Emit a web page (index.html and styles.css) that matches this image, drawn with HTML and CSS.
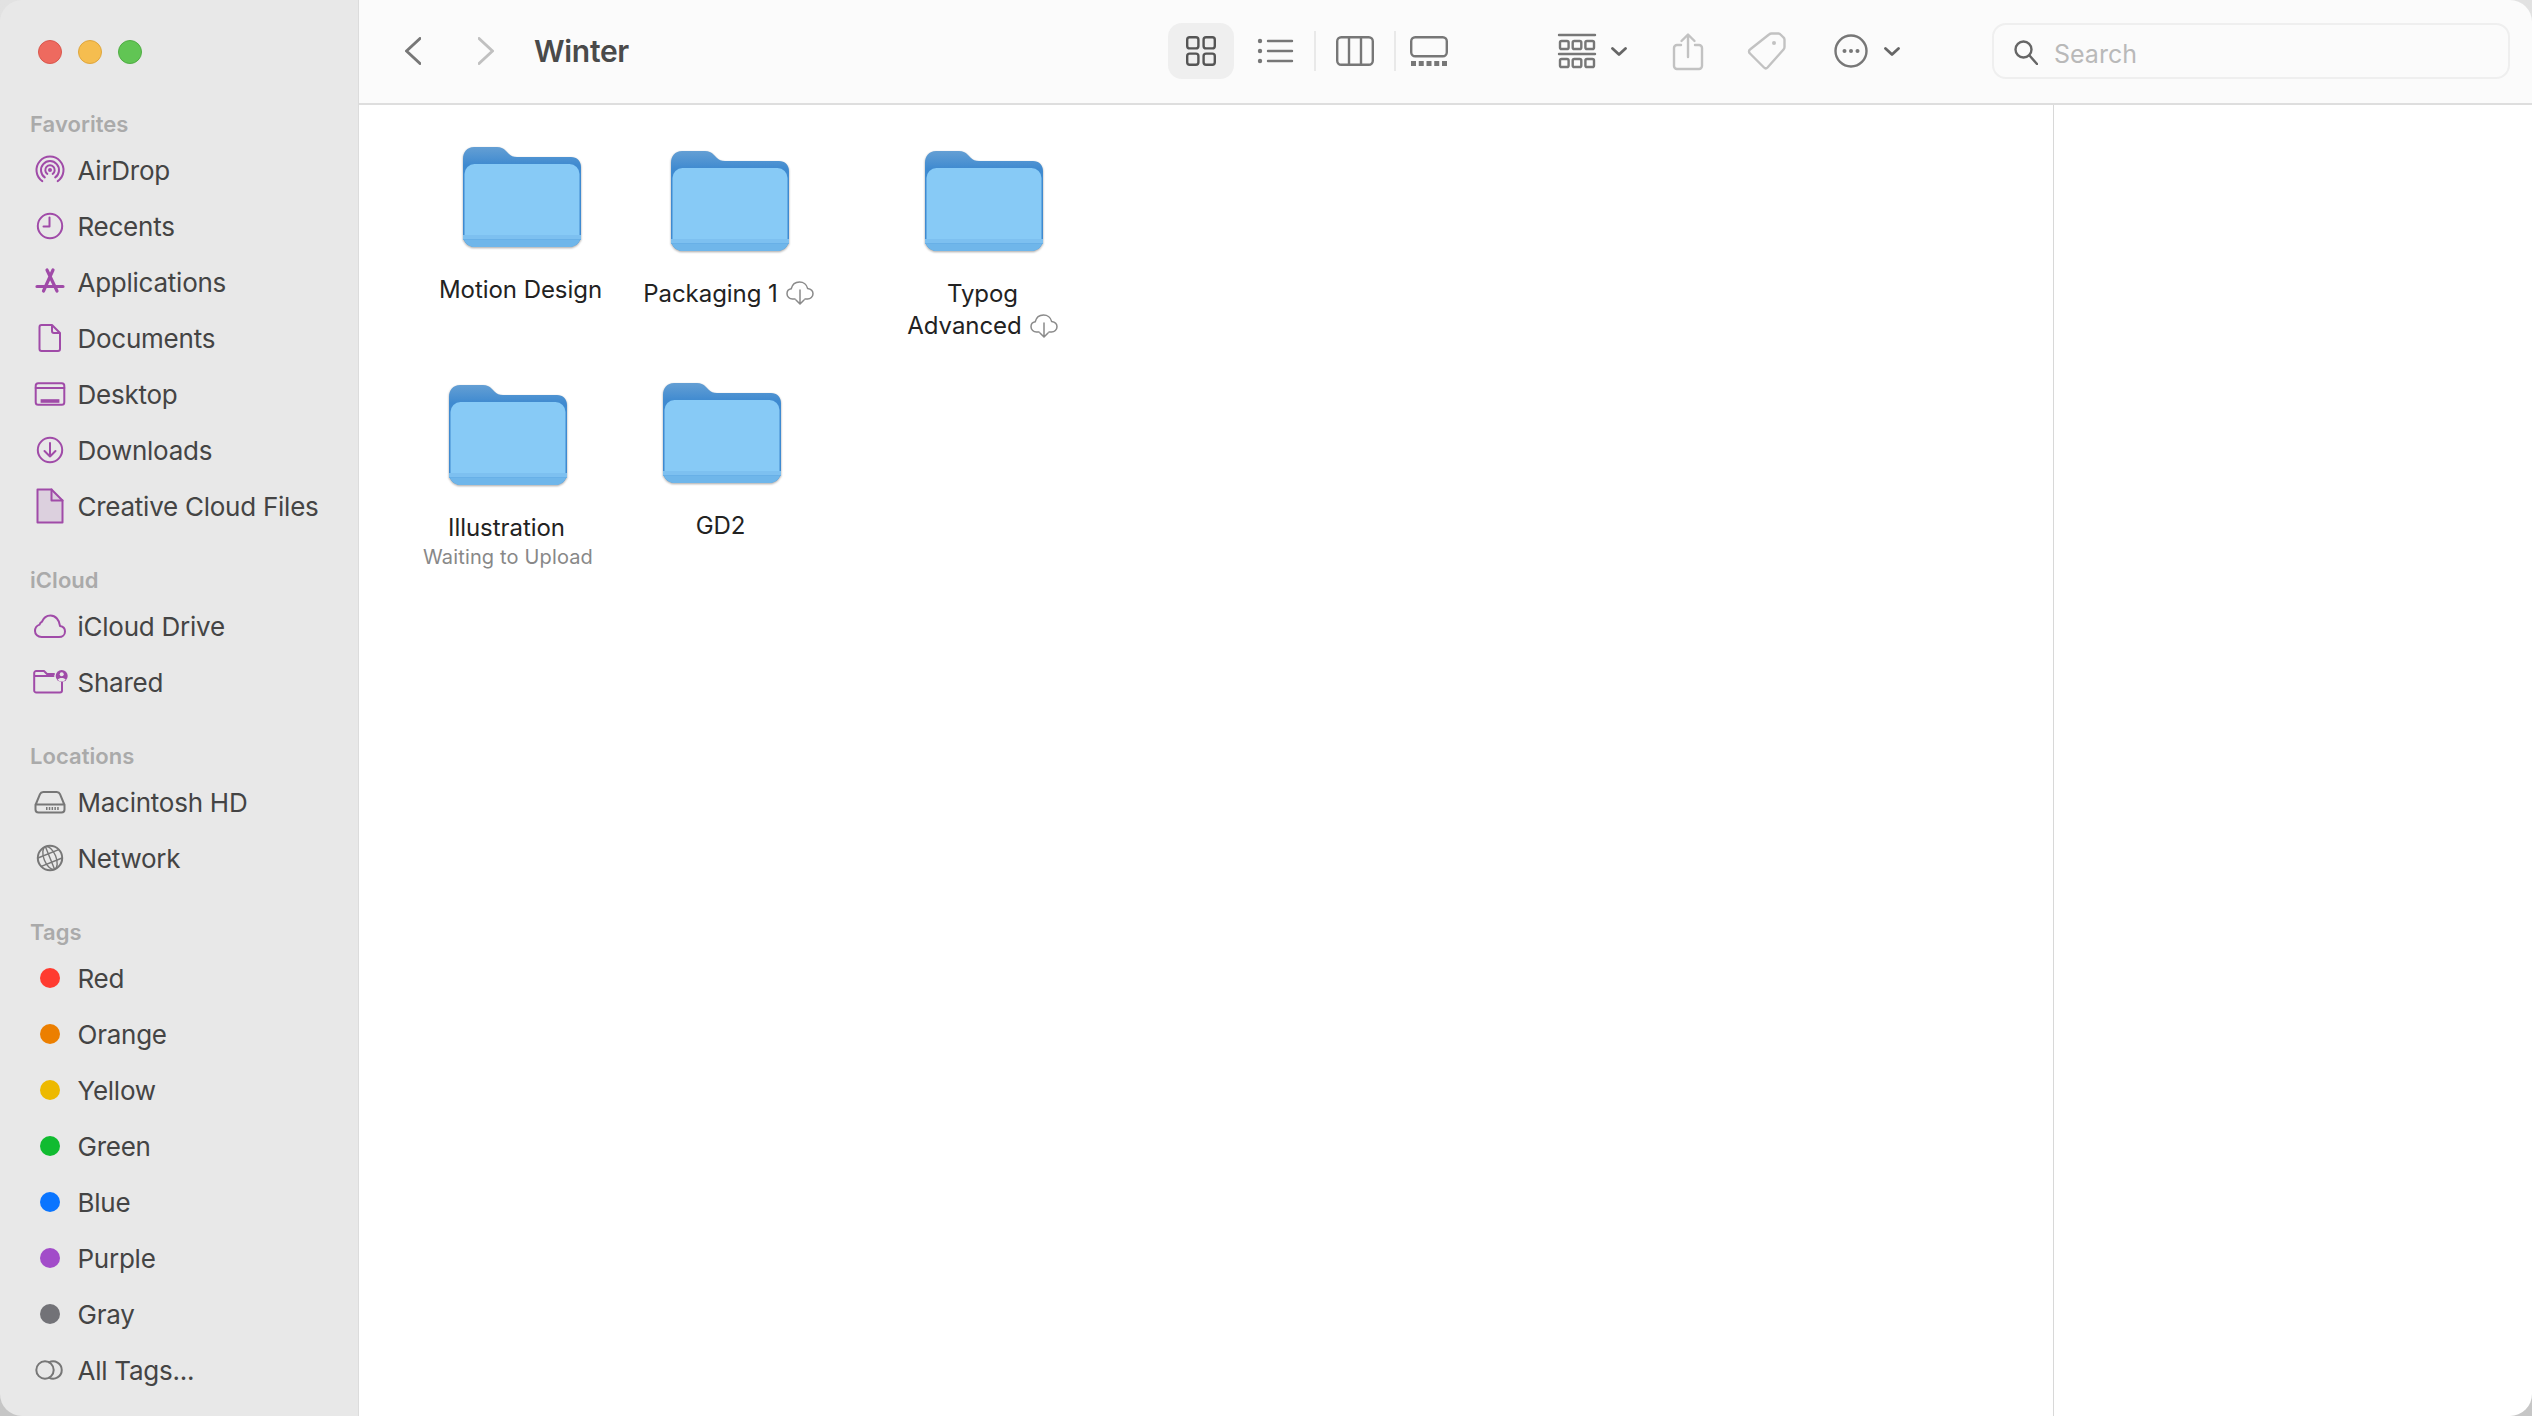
FILE: index.html
```html
<!DOCTYPE html>
<html>
<head>
    <title>Winter</title>
    <link rel="stylesheet" href="styles.css">
</head>
<body>
    <svg class="defs">
        <defs>
            <linearGradient id="folderBack" x1="0" y1="0" x2="0" y2="1">
                <stop offset="0" stop-color="#649fd4"/>
                <stop offset="0.18" stop-color="#3f8ad0"/>
            </linearGradient>
            <symbol id="folder" viewBox="0 0 118 100">
                <path fill="url(#folderBack)" d="M0 12C0 5 4 0 11 0H34C38 0 40 1 43 4L46 7C48 9 50 10 54 10H108C114 10 118 14 118 20V88C118 95 113 100 106 100H12C5 100 0 95 0 88Z"/>
                <rect x="1.5" y="17" width="115" height="83" rx="10" fill="#87caf6"/>
                <path fill="#6fb6ea" d="M0 88H118C118 95 113 100 106 100H12C5 100 0 95 0 88Z"/>
                <path fill="#7dc0f0" d="M0 88H118V92H0Z"/>
                <path fill="#68b0e7" d="M0 92H118V93H0Z"/>
            </symbol>
            <symbol id="cloudDown" viewBox="0 0 28 24">
                <path fill="none" stroke="currentColor" stroke-width="1.5" stroke-linecap="round" d="M9 18H6.5C3.5 18 1 15.8 1 12.8C1 10.2 2.8 8.2 5.2 7.8C6.2 3.8 9.5 1 13.5 1C17.5 1 20.8 3.6 21.6 7.4C24.8 7.8 27 10 27 12.8C27 15.8 24.5 18 21.5 18H19M14 9V23M10 19L14 23L18 19"/>
            </symbol>
        </defs>
    </svg>

    <div class="window">
        <aside class="sidebar">
            <div class="lights">
                <span class="light light-red"></span>
                <span class="light light-yellow"></span>
                <span class="light light-green"></span>
            </div>

            <h2 class="side-title">Favorites</h2>
            <div class="side-row">
                <svg class="side-icon" viewBox="0 0 36 36"><path d="M10.3 29.1A13.5 13.5 0 1 1 25.7 29.1M12.8 25.4A9 9 0 1 1 23.2 25.4M15.3 21.9A4.7 4.7 0 1 1 20.7 21.9"/><circle class="solid" cx="18" cy="18" r="2"/></svg>
                AirDrop
            </div>
            <div class="side-row">
                <svg class="side-icon" viewBox="0 0 36 36"><circle cx="18" cy="18" r="12.2"/><path d="M17.5 9.5V18.5H11.5"/></svg>
                Recents
            </div>
            <div class="side-row">
                <svg class="side-icon thick" viewBox="0 0 36 36"><path d="M21 6L11.5 27M15 6L25 27M5 22.5H31"/></svg>
                Applications
            </div>
            <div class="side-row">
                <svg class="side-icon" viewBox="0 0 36 36"><path d="M9.5 5H20L28 13V29A2 2 0 0 1 26 31H9.5A2 2 0 0 1 7.5 29V7A2 2 0 0 1 9.5 5ZM20 5V11A2 2 0 0 0 22 13H28"/></svg>
                Documents
            </div>
            <div class="side-row">
                <svg class="side-icon" viewBox="0 0 36 36"><rect x="3.7" y="7.2" width="28.6" height="21.6" rx="2.5"/><path d="M3.7 12H32.3"/><rect class="solid" x="8.6" y="23.2" width="18.8" height="3.6"/></svg>
                Desktop
            </div>
            <div class="side-row">
                <svg class="side-icon" viewBox="0 0 36 36"><circle cx="18" cy="18" r="12.2"/><path d="M18 11V24.5M12.5 19L18 24.5L23.5 19"/></svg>
                Downloads
            </div>
            <div class="side-row">
                <svg class="side-icon" viewBox="0 0 36 36"><path class="soft" d="M5.5 1.5H19.5L30.5 12.5V34.5H5.5Z"/><path d="M19.5 1.5V12.5H30.5"/></svg>
                Creative Cloud Files
            </div>

            <h2 class="side-title side-gap">iCloud</h2>
            <div class="side-row">
                <svg class="side-icon" viewBox="0 0 36 36"><path d="M9.5 29H27C30.4 29 33 26.6 33 23.4C33 20.5 30.9 18.3 28 17.9C27.5 12 23.4 7.5 18.5 7.5C14.5 7.5 11.5 9.9 10 13.7C8.5 14 8 15 7.6 16.6C4.8 17.6 3 20 3 23C3 26.5 5.9 29 9.5 29Z"/></svg>
                iCloud Drive
            </div>
            <div class="side-row">
                <svg class="side-icon" viewBox="0 0 36 36"><path d="M21.5 12H2.2V26.5A2 2 0 0 0 4.2 28.5H28A2 2 0 0 0 30 26.5V18M2.2 12V9A2 2 0 0 1 4.2 7H12L15 10H22"/><circle class="solid" cx="29.7" cy="12" r="6"/><circle class="cut" cx="29.7" cy="10.2" r="2"/><path class="cut" d="M25.7 15.5C27 13.4 32.4 13.4 33.7 15.5L31.5 17.5H27.5Z"/></svg>
                Shared
            </div>

            <h2 class="side-title side-gap">Locations</h2>
            <div class="side-row">
                <svg class="side-icon gray" viewBox="0 0 36 36"><path d="M3.5 21L8 10.2A3.5 3.5 0 0 1 11.2 8H24.8A3.5 3.5 0 0 1 28 10.2L32.5 21V25.5A3 3 0 0 1 29.5 28.5H6.5A3 3 0 0 1 3.5 25.5ZM3.5 20.5H32.5"/><path class="vents" d="M14 24.5H27"/></svg>
                Macintosh HD
            </div>
            <div class="side-row">
                <svg class="side-icon gray" viewBox="0 0 36 36"><circle cx="18" cy="18" r="12.2"/><g class="thin" transform="rotate(-22 18 18)"><ellipse cx="18" cy="18" rx="6" ry="12.2"/><path d="M18 5.8V30.2M6.8 13.5H29.2M6.8 22.5H29.2"/></g></svg>
                Network
            </div>

            <h2 class="side-title side-gap">Tags</h2>
            <div class="side-row"><span class="dot-box"><span class="dot dot-red"></span></span>Red</div>
            <div class="side-row"><span class="dot-box"><span class="dot dot-orange"></span></span>Orange</div>
            <div class="side-row"><span class="dot-box"><span class="dot dot-yellow"></span></span>Yellow</div>
            <div class="side-row"><span class="dot-box"><span class="dot dot-green"></span></span>Green</div>
            <div class="side-row"><span class="dot-box"><span class="dot dot-blue"></span></span>Blue</div>
            <div class="side-row"><span class="dot-box"><span class="dot dot-purple"></span></span>Purple</div>
            <div class="side-row"><span class="dot-box"><span class="dot dot-gray"></span></span>Gray</div>
            <div class="side-row">
                <svg class="side-icon gray" viewBox="0 0 36 36"><circle cx="13" cy="18" r="8.7"/><path d="M17 10.3A8.7 8.7 0 1 1 17 25.7"/></svg>
                All Tags...
            </div>
        </aside>

        <main class="main">
            <header class="toolbar">
                <svg class="chevron" width="16" height="28" viewBox="0 0 16 28"><path d="M15 1.5L1.5 14L15 26.5"/></svg>
                <svg class="chevron chevron-off" width="16" height="28" viewBox="0 0 16 28"><path d="M1 1.5L14.5 14L1 26.5"/></svg>
                <div class="title">Winter</div>

                <div class="view-btn view-active">
                    <svg class="tool-icon dark" width="30" height="30" viewBox="0 0 30 30"><rect x="1.2" y="1.2" width="11.2" height="11.2" rx="2.5"/><rect x="17.6" y="1.2" width="11.2" height="11.2" rx="2.5"/><rect x="1.2" y="17.6" width="11.2" height="11.2" rx="2.5"/><rect x="17.6" y="17.6" width="11.2" height="11.2" rx="2.5"/></svg>
                </div>
                <div class="view-btn view-list">
                    <svg class="tool-icon" width="36" height="26" viewBox="0 0 36 26"><path d="M11 3H35M11 13H35M11 23H35"/><circle class="solid" cx="3" cy="3" r="2.2"/><circle class="solid" cx="3" cy="13" r="2.2"/><circle class="solid" cx="3" cy="23" r="2.2"/></svg>
                </div>
                <span class="divider"></span>
                <div class="view-btn view-column">
                    <svg class="tool-icon" width="38" height="30" viewBox="0 0 38 30"><rect x="1.2" y="1.2" width="35.6" height="27.6" rx="4"/><path d="M13 1.2V28.8M25 1.2V28.8"/></svg>
                </div>
                <span class="divider"></span>
                <div class="view-btn">
                    <svg class="tool-icon" width="38" height="30" viewBox="0 0 38 30"><rect x="1.2" y="1.2" width="35.6" height="19" rx="4"/><path class="dots" d="M1 27.5H37"/></svg>
                </div>

                <div class="tool-group tool-sort">
                    <svg class="tool-icon" width="36" height="34" viewBox="0 0 36 34"><path d="M0 1H36M0 20H36"/><rect x="1" y="7" width="8.6" height="8" rx="1.6"/><rect x="13.7" y="7" width="8.6" height="8" rx="1.6"/><rect x="26.4" y="7" width="8.6" height="8" rx="1.6"/><rect x="1" y="25" width="8.6" height="8" rx="1.6"/><rect x="13.7" y="25" width="8.6" height="8" rx="1.6"/><rect x="26.4" y="25" width="8.6" height="8" rx="1.6"/></svg>
                    <svg class="caret" width="16" height="9" viewBox="0 0 16 9"><path d="M1.5 1.5L8 7.5L14.5 1.5"/></svg>
                </div>
                <svg class="tool-icon faded tool-share" width="30" height="37" viewBox="0 0 30 37"><path d="M8 12H4A3 3 0 0 0 1 15V33A3 3 0 0 0 4 36H26A3 3 0 0 0 29 33V15A3 3 0 0 0 26 12H22M15 24V2M8.5 8L15 1.5L21.5 8"/></svg>
                <svg class="tool-icon faded tool-tag" width="38" height="38" viewBox="0 0 38 38"><path d="M2 17.5L21 2.5A4 4 0 0 1 24 1.5H30.5A3 3 0 0 1 32.5 2.5L35.5 5.5A3 3 0 0 1 36.5 7.5V15A4 4 0 0 1 35.5 17.5L19.5 35.5A2.5 2.5 0 0 1 16 35.5L2 21.5A2.5 2.5 0 0 1 2 17.5Z"/><circle class="solid" cx="26" cy="11" r="2"/></svg>
                <div class="tool-group tool-more">
                    <svg class="tool-icon" width="34" height="34" viewBox="0 0 34 34"><circle cx="17" cy="17" r="15.5"/><circle class="solid" cx="10.5" cy="17" r="2"/><circle class="solid" cx="17" cy="17" r="2"/><circle class="solid" cx="23.5" cy="17" r="2"/></svg>
                    <svg class="caret" width="16" height="9" viewBox="0 0 16 9"><path d="M1.5 1.5L8 7.5L14.5 1.5"/></svg>
                </div>

                <div class="search">
                    <svg class="search-icon" width="24" height="25" viewBox="0 0 24 25"><circle cx="9.5" cy="9.5" r="8"/><path d="M15.5 15.5L23 24"/></svg>
                    <span class="search-text">Search</span>
                </div>
            </header>

            <div class="content">
                <section class="canvas">
                    <div class="item item-motion">
                        <svg class="folder"><use href="#folder"/></svg>
                        <div class="label">Motion Design</div>
                    </div>
                    <div class="item item-packaging">
                        <svg class="folder"><use href="#folder"/></svg>
                        <div class="label">Packaging 1<svg class="cloud"><use href="#cloudDown"/></svg></div>
                    </div>
                    <div class="item item-typog">
                        <svg class="folder"><use href="#folder"/></svg>
                        <div class="label">Typog</div>
                        <div class="label">Advanced<svg class="cloud"><use href="#cloudDown"/></svg></div>
                    </div>
                    <div class="item item-illustration">
                        <svg class="folder"><use href="#folder"/></svg>
                        <div class="label">Illustration</div>
                        <div class="sublabel">Waiting to Upload</div>
                    </div>
                    <div class="item item-gd2">
                        <svg class="folder"><use href="#folder"/></svg>
                        <div class="label">GD2</div>
                    </div>
                </section>
                <section class="preview"></section>
            </div>
        </main>
    </div>
</body>
</html>
```

FILE: styles.css
```css
* {
    box-sizing: border-box;
}

html, body {
    margin: 0;
    height: 100%;
    overflow: hidden;
    background: linear-gradient(#e2e2e2, #c6c6c6);
}

.defs {
    position: absolute;
    width: 0;
    height: 0;
}

.window {
    display: flex;
    width: 2532px;
    height: 1416px;
    border-radius: 22px;
    overflow: hidden;
    font-family: Inter, "Noto Sans", sans-serif;
}

/* Sidebar */
.sidebar {
    width: 359px;
    flex: none;
    padding-top: 40px;
    background: #e8e8e8;
    border-right: 1px solid #dcdcdc;
}

.lights {
    display: flex;
    gap: 16px;
    padding-left: 38px;
    margin-bottom: 40px;
}

.light {
    width: 24px;
    height: 24px;
    border-radius: 50%;
}

.light-red { background: #ee6a5f; border: 1px solid #d9574d; }
.light-yellow { background: #f5bd4f; border: 1px solid #dfa63d; }
.light-green { background: #61c554; border: 1px solid #50ad44; }

.side-title {
    height: 38px;
    margin: 0;
    padding-left: 30px;
    font-size: 22px;
    font-weight: 600;
    line-height: 40px;
    letter-spacing: 0.05px;
    color: #aaaaaa;
}

.side-gap {
    margin-top: 26px;
}

.side-row {
    display: flex;
    align-items: center;
    gap: 9.5px;
    height: 56px;
    padding-left: 32px;
    font-size: 26px;
    letter-spacing: -0.25px;
    color: #444444;
}

.side-icon {
    width: 36px;
    height: 36px;
    flex: none;
    overflow: visible;
    fill: none;
    stroke: #a04ba8;
    stroke-width: 2;
    stroke-linecap: round;
    stroke-linejoin: round;
}

.side-icon.thick { stroke-width: 3.2; }
.side-icon.gray { stroke: #777777; }
.side-icon .solid { fill: #a04ba8; stroke: none; }
.side-icon .soft { fill: #dcd0de; }
.side-icon .cut { fill: #e8e8e8; stroke: none; }
.side-icon .thin { stroke-width: 1.4; }
.side-icon .vents { stroke-dasharray: 1.5 1.3; stroke-linecap: butt; stroke-width: 3; }

.dot-box {
    display: flex;
    align-items: center;
    justify-content: center;
    width: 36px;
    height: 36px;
}

.dot {
    width: 20px;
    height: 20px;
    border-radius: 50%;
}

.dot-red { background: #ff3b30; }
.dot-orange { background: #ec7f00; }
.dot-yellow { background: #edb900; }
.dot-green { background: #10bb30; }
.dot-blue { background: #0a75ff; }
.dot-purple { background: #a24cc9; }
.dot-gray { background: #727277; }

/* Toolbar */
.main {
    flex: 1;
    display: flex;
    flex-direction: column;
    min-width: 0;
}

.toolbar {
    display: flex;
    align-items: center;
    height: 105px;
    flex: none;
    padding-left: 46px;
    padding-bottom: 1px;
    background: #fbfbfb;
    border-bottom: 2px solid #dedede;
}

.chevron {
    flex: none;
    fill: none;
    stroke: #777777;
    stroke-width: 3;
    stroke-linecap: round;
    stroke-linejoin: round;
}

.chevron-off {
    margin-left: 57px;
    stroke: #c0c0c0;
}

.title {
    width: 634px;
    margin-left: 40px;
    font-size: 30px;
    font-weight: 600;
    letter-spacing: -0.3px;
    color: #4a4a4a;
}

.view-btn {
    display: flex;
    align-items: center;
    justify-content: center;
    width: 66px;
    height: 56px;
    flex: none;
    border-radius: 14px;
}

.view-active { background: #efefef; }
.view-list { margin-left: 8px; }
.view-column { margin-left: 6px; }

.divider {
    width: 2px;
    height: 40px;
    margin-left: 6px;
    background: #e9e9e9;
}

.tool-icon {
    flex: none;
    overflow: visible;
    fill: none;
    stroke: #777777;
    stroke-width: 2.4;
    stroke-linecap: round;
    stroke-linejoin: round;
}

.tool-icon.dark { stroke: #555555; }
.tool-icon.faded { stroke: #c2c2c2; }
.tool-icon .solid { fill: #777777; stroke: none; }
.tool-icon.faded .solid { fill: #c2c2c2; }
.tool-icon .dots { stroke-width: 5; stroke-linecap: butt; stroke-dasharray: 5 2.75; }

.tool-group {
    display: flex;
    align-items: center;
    gap: 16px;
    flex: none;
}

.caret {
    flex: none;
    fill: none;
    stroke: #666666;
    stroke-width: 2.8;
    stroke-linecap: round;
    stroke-linejoin: round;
}

.tool-sort { margin-left: 97px; }
.tool-share { margin-left: 46px; }
.tool-tag { margin-left: 45px; }
.tool-more { margin-left: 48px; }

.search {
    display: flex;
    align-items: center;
    gap: 16px;
    width: 518px;
    height: 56px;
    flex: none;
    margin-left: 92px;
    padding-left: 20px;
    border: 2px solid #efefef;
    border-radius: 14px;
}

.search-icon {
    flex: none;
    margin-top: 2px;
    fill: none;
    stroke: #666666;
    stroke-width: 2.4;
    stroke-linecap: round;
}

.search-text {
    padding-top: 6px;
    font-size: 25px;
    color: #b9b9b9;
}

/* Icon view: items sit where they were dropped */
.content {
    flex: 1;
    display: flex;
    min-height: 0;
}

.canvas {
    position: relative;
    flex: 1;
    background: #ffffff;
}

.preview {
    width: 479px;
    flex: none;
    background: #ffffff;
    border-left: 1px solid #d8d8d8;
}

.item {
    position: absolute;
    display: flex;
    flex-direction: column;
    align-items: center;
    width: 240px;
}

.item-motion { left: 43px; top: 42px; }
.item-packaging { left: 251px; top: 46px; }
.item-typog { left: 505px; top: 46px; }
.item-illustration { left: 29px; top: 280px; }
.item-gd2 { left: 243px; top: 278px; }

.folder {
    width: 118px;
    height: 100px;
    margin-bottom: 26px;
    overflow: visible;
    filter: drop-shadow(0 1.5px 1px rgba(0, 0, 0, 0.35));
}

.label {
    display: flex;
    align-items: center;
    height: 32.5px;
    margin-left: -3px;
    font-size: 24px;
    letter-spacing: -0.05px;
    white-space: nowrap;
    color: #222222;
}

.sublabel {
    height: 25px;
    margin-top: 1px;
    font-size: 20px;
    line-height: 25px;
    letter-spacing: 0.15px;
    white-space: nowrap;
    color: #888888;
}

.cloud {
    width: 28px;
    height: 24px;
    margin-left: 8px;
    color: #8a8a8a;
}
```
